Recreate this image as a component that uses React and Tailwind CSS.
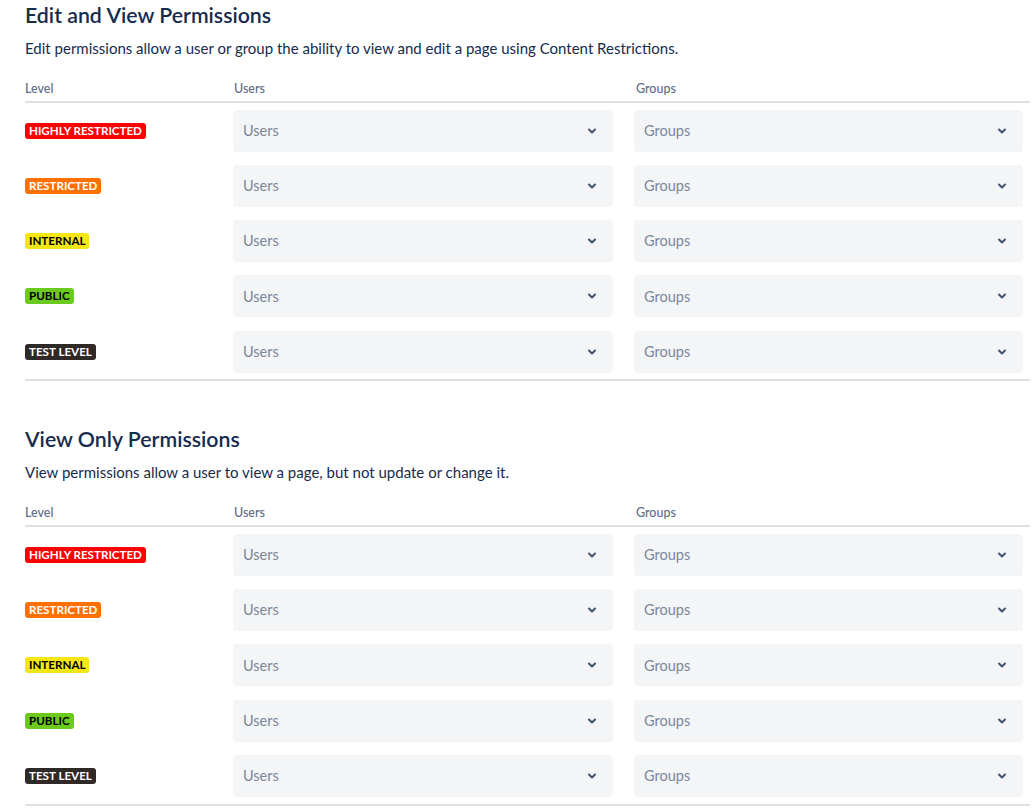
import React from "react";

const levels = [
  { name: "HIGHLY RESTRICTED", cls: "bg-[#ff0000] text-white" },
  { name: "RESTRICTED", cls: "bg-[#ff7000] text-white" },
  { name: "INTERNAL", cls: "bg-[#f5e614] text-black" },
  { name: "PUBLIC", cls: "bg-[#6cc91e] text-black" },
  { name: "TEST LEVEL", cls: "bg-[#2f2a28] text-white" },
];

function Chevron() {
  return (
    <svg className="w-[10px] h-[10px] text-[#42526e]" viewBox="0 0 10 10" fill="none">
      <path d="M2 3.5l3 3 3-3" stroke="currentColor" strokeWidth="2" strokeLinecap="round" strokeLinejoin="round" />
    </svg>
  );
}

function Select({ label, className }) {
  return (
    <div className={"h-[42px] bg-[#f4f5f7] rounded-[4px] flex items-center justify-between pl-[10px] pr-[16px] " + className}>
      <span className="text-[14.5px] text-[#7a869a]">{label}</span>
      <Chevron />
    </div>
  );
}

function Section({ title, description }) {
  return (
    <div>
      <h2 className="text-[21.3px] leading-[24px] font-semibold text-[#172b4d]">{title}</h2>
      <p className="mt-[11px] text-[15px] leading-[20px] text-[#172b4d]">{description}</p>
      <div className="mt-[23px] w-[1005px]">
        <div className="flex text-[12.5px] leading-[16px] font-medium text-[#5e6c84] pb-[4px] border-b-2 border-[#dfe1e6]">
          <div className="w-[208px]">Level</div>
          <div className="w-[401px] pl-[1px]">Users</div>
          <div className="pl-[2px]">Groups</div>
        </div>
        <div className="border-b-2 border-[#dfe1e6]">
          {levels.map((l) => (
            <div key={l.name} className="flex items-center h-[55.25px]">
              <div className="w-[208px] flex items-center">
                <span className={"inline-block text-[11.6px] leading-[16px] font-bold px-[4px] rounded-[3px] " + l.cls}>
                  {l.name}
                </span>
              </div>
              <Select label="Users" className="w-[380px]" />
              <div className="w-[21px]" />
              <Select label="Groups" className="w-[389px]" />
            </div>
          ))}
        </div>
      </div>
    </div>
  );
}

export default function App() {
  return (
    <div className="bg-white min-h-screen pl-[25px] pt-[3px]" style={{ fontFamily: "Lato, 'Noto Sans', sans-serif" }}>
      <Section
        title="Edit and View Permissions"
        description="Edit permissions allow a user or group the ability to view and edit a page using Content Restrictions."
      />
      <div className="h-[46px]" />
      <Section
        title="View Only Permissions"
        description="View permissions allow a user to view a page, but not update or change it."
      />
    </div>
  );
}
